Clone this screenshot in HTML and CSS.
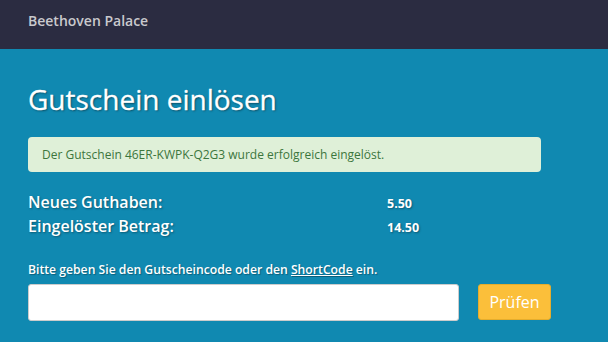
FILE: index.html
```html
<!DOCTYPE html>
<html>
<head>
  <title>Gutschein einlösen</title>
  <link rel="stylesheet" href="styles.css">
</head>
<body>
  <nav class="navbar">
    <span class="brand">Beethoven Palace</span>
  </nav>
  <main class="content">
    <h1>Gutschein einlösen</h1>
    <div class="alert">Der Gutschein 46ER-KWPK-Q2G3 wurde erfolgreich eingelöst.</div>
    <div class="balance">
      <span class="label">Neues Guthaben:</span>
      <span class="value">5.50</span>
      <span class="label">Eingelöster Betrag:</span>
      <span class="value">14.50</span>
    </div>
    <form class="redeem" onsubmit="return false">
      <label for="code">Bitte geben Sie den Gutscheincode oder den <a href="#">ShortCode</a> ein.</label>
      <div class="row">
        <input type="text" id="code">
        <button type="submit">Prüfen</button>
      </div>
    </form>
  </main>
</body>
</html>
```

FILE: styles.css
```css
body {
  margin: 0;
  background: #1089b1;
  font-family: 'Open Sans', 'Segoe UI', Arial, sans-serif;
  color: #fff;
}
.navbar {
  background: #2b2c41;
  height: 49px;
  display: flex;
  align-items: center;
  padding: 0 28px;
}
.brand {
  color: #c9c9cd;
  font-size: 14px;
  font-weight: 600;
  margin-top: -8px;
}
.content {
  padding: 0 28px;
}
h1 {
  margin: 30px 0 0;
  font-size: 28px;
  font-weight: 500;
  line-height: 40px;
  text-shadow: 1px 1px 2px rgba(0,0,0,0.45);
  -webkit-text-stroke: 0.3px #fff;
}
.alert {
  margin-top: 18px;
  width: 513px;
  box-sizing: border-box;
  height: 35px;
  background: #dff0d8;
  color: #3c763d;
  border-radius: 4px;
  font-size: 12px;
  line-height: 35px;
  padding: 0 14px;
}
.balance {
  margin-top: 18px;
  display: grid;
  grid-template-columns: 359px auto;
  align-items: center;
}
.label {
  font-size: 16px;
  font-weight: 600;
  line-height: 24px;
  text-shadow: 1px 1px 2px rgba(0,0,0,0.35);
}
.value {
  font-size: 12.5px;
  font-weight: 700;
  text-shadow: 1px 1px 2px rgba(0,0,0,0.35);
  padding-top: 3px;
}
.redeem {
  margin-top: 23px;
}
.redeem label {
  display: block;
  font-size: 12.2px;
  font-weight: 600;
  line-height: 18px;
  text-shadow: 1px 1px 1px rgba(0,0,0,0.3);
}
.redeem a {
  color: #fff;
}
.row {
  margin-top: 5px;
  display: flex;
  gap: 19px;
}
.row input {
  width: 431px;
  height: 37px;
  box-sizing: border-box;
  border: 1px solid #ccc;
  border-radius: 3px;
  background: #fff;
}
.row button {
  width: 73px;
  height: 36px;
  border: 1px solid #e6ad2c;
  border-radius: 3px;
  background: #fbbf3a;
  color: #fff;
  font-family: inherit;
  font-size: 16px;
  cursor: pointer;
}
```
